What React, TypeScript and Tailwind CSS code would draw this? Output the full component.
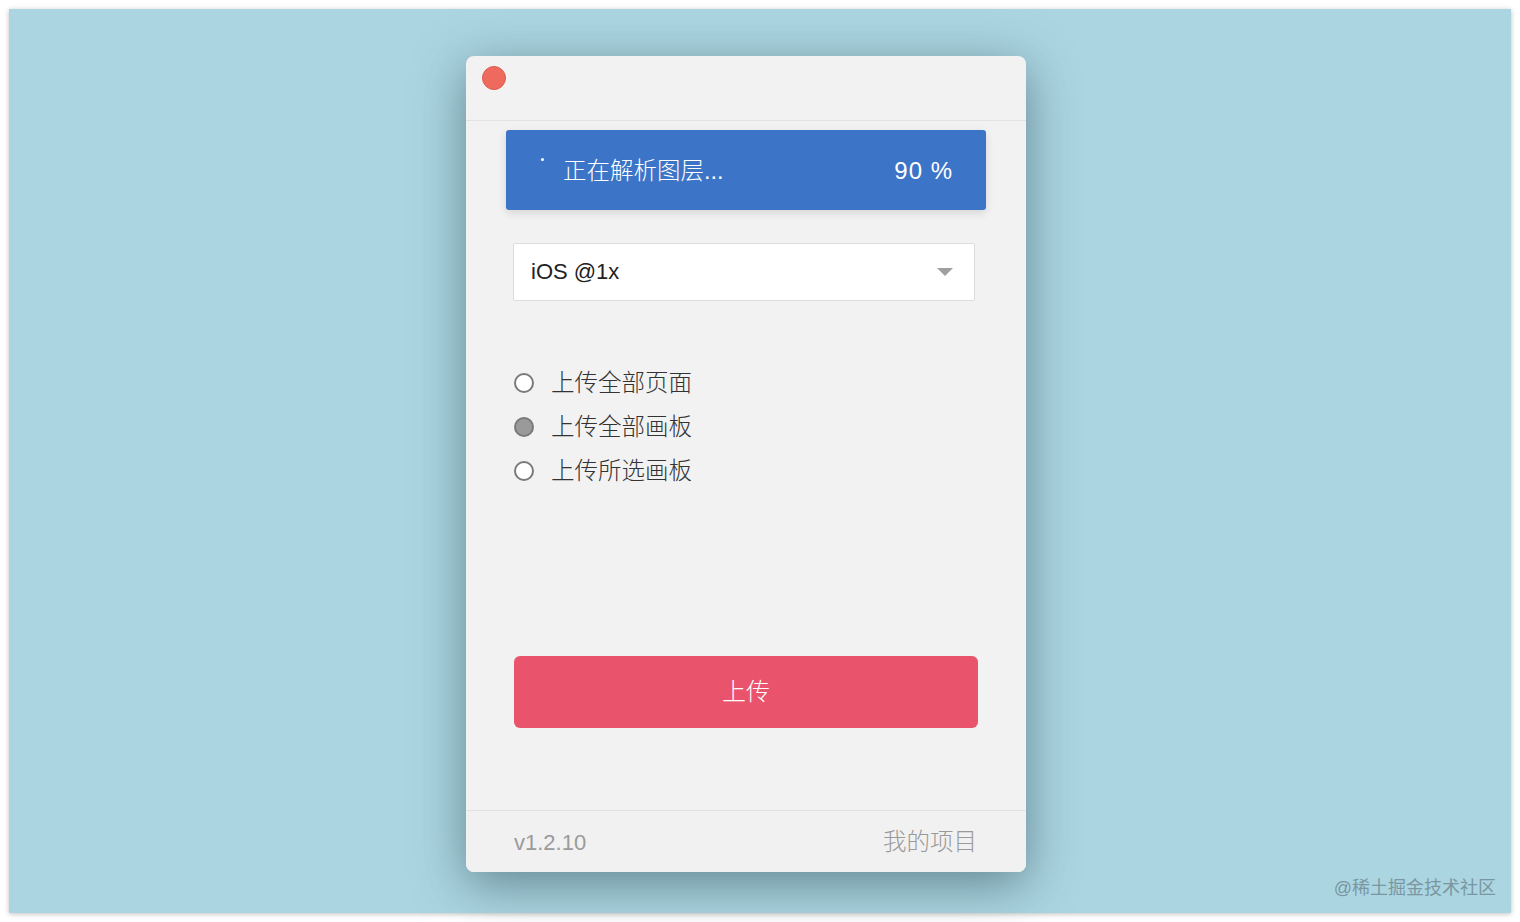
import React from "react";

const cjk = { fontFamily: '"Liberation Sans", "Noto Sans CJK SC", sans-serif' };

function Radio({ checked, label }: { checked?: boolean; label: string }) {
  return (
    <div className="flex h-[44px] items-center">
      <div
        className={
          checked
            ? "h-[20px] w-[20px] rounded-full border-2 border-[#7a7a7a] bg-[#9a9a9a]"
            : "h-[20px] w-[20px] rounded-full border-2 border-[#7a7a7a] bg-white"
        }
      />
      <span className="ml-[17px] pt-[2px] text-[23.5px] font-light leading-none text-[#333]">{label}</span>
    </div>
  );
}

export default function App() {
  return (
    <div className="min-h-[922px] w-[1520px] bg-white p-[9px]" style={cjk}>
      <div className="relative h-[904px] w-[1502px] bg-[#abd5e1] pl-[457px] pt-[47px] shadow-[0_1px_5px_rgba(0,0,0,0.25)]">
        <div className="flex h-[816px] w-[560px] flex-col overflow-hidden rounded-[8px] bg-[#f2f2f2] shadow-[0_12px_50px_rgba(40,70,80,0.55)]">
          {/* title bar */}
          <div className="flex h-[65px] shrink-0 items-start border-b border-[#e2e2e2] pl-[16px] pt-[10px]">
            <div className="h-[24px] w-[24px] rounded-full border border-[#de5a4e] bg-[#ee6a5f]" />
          </div>
          {/* content */}
          <div className="flex flex-1 flex-col">
            <div className="mx-[40px] mt-[9px] flex h-[80px] items-center rounded-[3px] bg-[#3c74c7] pl-[35px] pr-[33px] text-white shadow-[0_3px_8px_rgba(0,0,0,0.12)]">
              <div className="mb-[22px] h-[3px] w-[3px] rounded-full bg-white" />
              <span className="ml-[19px] pt-[3px] text-[23.5px] font-light leading-none">正在解析图层...</span>
              <span className="ml-auto pt-[2px] text-[24px] font-light leading-none tracking-[1px]">90 %</span>
            </div>
            <div className="ml-[47px] mt-[33px] flex h-[58px] w-[462px] items-center rounded-[2px] border border-[#dddddd] bg-white pl-[17px] pr-[21px]">
              <span className="text-[22px] leading-none text-[#222]">iOS @1x</span>
              <svg className="ml-auto" width="16" height="8" viewBox="0 0 16 8">
                <path d="M0 0 L16 0 L8 8 Z" fill="#a0a0a0" />
              </svg>
            </div>
            <div className="ml-[48px] mt-[60px] flex flex-col">
              <Radio label="上传全部页面" />
              <Radio checked label="上传全部画板" />
              <Radio label="上传所选画板" />
            </div>
            <div className="ml-[48px] mt-[163px] flex h-[72px] w-[464px] items-center justify-center rounded-[6px] bg-[#ea536c]">
              <span className="text-[24px] font-light leading-none text-white">上传</span>
            </div>
          </div>
          {/* footer */}
          <div className="flex h-[62px] shrink-0 items-center justify-between border-t border-[#e2e2e2] bg-[#f1f1f1] pl-[48px] pr-[49px] pt-[3px]">
            <span className="text-[22px] leading-none text-[#9a9a9a]">v1.2.10</span>
            <span className="text-[23.5px] font-light leading-none text-[#9a9a9a]">我的项目</span>
          </div>
        </div>
        <div className="absolute bottom-[16px] right-[15px] text-[18px] leading-none text-[#7a97a1]">
          @稀土掘金技术社区
        </div>
      </div>
    </div>
  );
}
